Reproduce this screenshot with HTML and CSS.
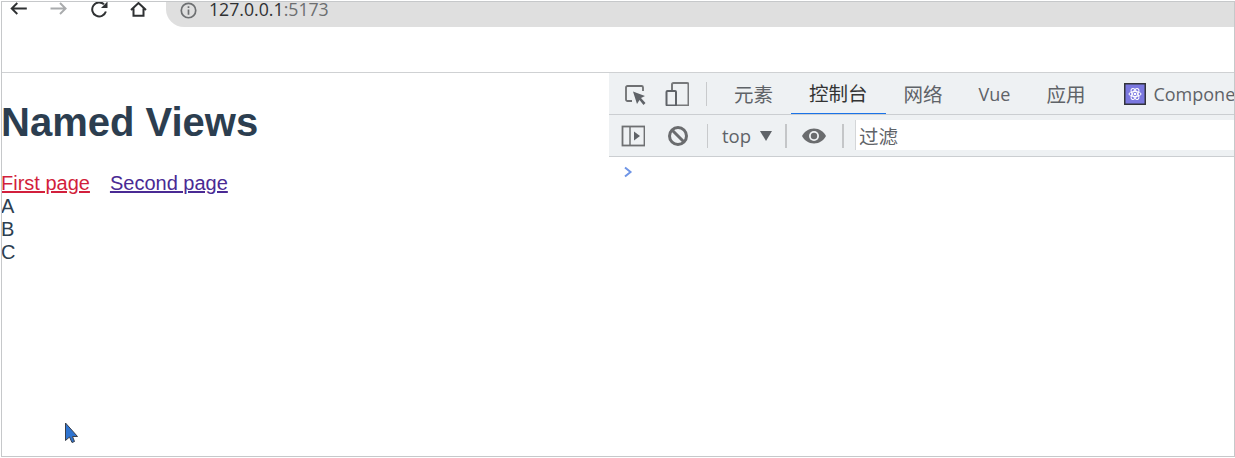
FILE: index.html
```html
<!DOCTYPE html>
<html lang="zh">
<head>
<meta charset="utf-8">
<title>Named Views</title>
<link rel="stylesheet" href="styles.css">
</head>
<body>
<div class="window">
  <header class="browserbar">
    <div class="navicons">
      <svg class="nav" width="18" height="18" viewBox="0 0 18 18"><path d="M16.800 8.500H1.800M7.300 3L1.700 8.500L7.300 14" fill="none" stroke="#2f3133" stroke-width="1.900"/></svg>
      <svg class="nav" width="18" height="18" viewBox="0 0 18 18"><path d="M0.500 8.500H15.500M10 3L15.600 8.500L10 14" fill="none" stroke="#a9abad" stroke-width="1.900"/></svg>
      <svg class="nav" width="18" height="18" viewBox="0 0 18 18"><path d="M15.900 11.500A7 7 0 1 1 14 4.300" fill="none" stroke="#2f3133" stroke-width="2"/><path d="M17.500 1.500V8H11Z" fill="#2f3133"/></svg>
      <svg class="nav" width="18" height="18" viewBox="0 0 18 18"><path d="M1 10L8.500 3L16 10M3.500 8.500V15.700H13.500V8.500" fill="none" stroke="#2f3133" stroke-width="2"/></svg>
    </div>
    <div class="omnibox">
      <svg class="info" width="17" height="17" viewBox="0 0 16 16"><circle cx="8" cy="8" r="6.800" fill="none" stroke="#6e7072" stroke-width="1.600"/><path d="M7.200 4h1.600v1.600H7.200zM7.200 7h1.600v5H7.200z" fill="#6e7072"/></svg>
      <span class="url">127.0.0.1<span class="port">:5173</span></span>
    </div>
  </header>
  <main class="content">
    <section class="page">
      <h1 class="title">Named Views</h1>
      <nav class="links">
        <a class="link active" href="#first">First page</a>
        <a class="link second" href="#second">Second page</a>
      </nav>
      <div class="view">A</div>
      <div class="view">B</div>
      <div class="view">C</div>
    </section>
    <section class="devtools">
      <div class="tabs">
        <svg class="dt-icon inspect" width="24" height="24" viewBox="0 0 24 24"><path d="M9 19H4.500A1.500 1.500 0 0 1 3 17.500V5.500A1.500 1.500 0 0 1 4.500 4H18.500A1.500 1.500 0 0 1 20 5.500V9" fill="none" stroke="#6e7072" stroke-width="1.800"/><path d="M10 9.500L22 14L18 16L22.500 21L20.500 23L16.500 18L14 22Z" fill="#5f6368"/></svg>
        <svg class="dt-icon device" width="24" height="24" viewBox="0 0 24 24"><path d="M7 9V2.500A1.500 1.500 0 0 1 8.500 1H22A1.500 1.500 0 0 1 23.500 2.500V22A1 1 0 0 1 22 23.500H11" fill="none" stroke="#77797b" stroke-width="2"/><rect x="1.500" y="9" width="9.500" height="14.500" rx="1" fill="none" stroke="#5f6368" stroke-width="2"/></svg>
        <span class="vsep tall"></span>
        <span class="tab">元素</span>
        <span class="tab selected">控制台</span>
        <span class="tab">网络</span>
        <span class="tab vue">Vue</span>
        <span class="tab">应用</span>
        <span class="tab comp">
          <svg class="react" width="22" height="22" viewBox="0 0 22 22"><rect x="0.750" y="0.750" width="20.500" height="20.500" fill="#7b78e0" stroke="#33343c" stroke-width="1.500"/><g fill="none" stroke="#fff" stroke-width="1"><ellipse cx="11" cy="11" rx="6" ry="2.600"/><ellipse cx="11" cy="11" rx="6" ry="2.600" transform="rotate(60 11 11)"/><ellipse cx="11" cy="11" rx="6" ry="2.600" transform="rotate(120 11 11)"/></g><circle cx="11" cy="11" r="1.300" fill="#fff"/></svg>
          <span>Compone</span>
        </span>
      </div>
      <div class="filterbar">
        <svg class="fb-icon" width="24" height="24" viewBox="0 0 24 24"><rect x="1.500" y="2.500" width="22" height="19" fill="none" stroke="#6e7072" stroke-width="1.800"/><path d="M9 3V21" stroke="#6e7072" stroke-width="1.500"/><path d="M13 7.500L19 12L13 16.500Z" fill="#5f6368"/></svg>
        <svg class="fb-icon clear" width="22" height="22" viewBox="0 0 22 22"><circle cx="11" cy="11" r="8.500" fill="none" stroke="#6a6c6e" stroke-width="3"/><path d="M5 5L17 17" stroke="#6a6c6e" stroke-width="3"/></svg>
        <span class="vsep first"></span>
        <span class="context">top</span>
        <span class="caret"></span>
        <span class="vsep thick"></span>
        <svg class="fb-icon eye" width="26" height="18" viewBox="0 0 26 18"><path d="M13 1.500C7.500 1.500 3.200 4.800 1 9C3.200 13.200 7.500 16.500 13 16.500C18.500 16.500 22.800 13.200 25 9C22.800 4.800 18.500 1.500 13 1.500Z" fill="#6a6c6e"/><circle cx="13" cy="9" r="5" fill="#eef1f3"/><circle cx="13" cy="9" r="3.200" fill="#6a6c6e"/></svg>
        <span class="vsep thick"></span>
        <div class="filter">过滤</div>
      </div>
      <div class="console">
        <svg class="prompt" width="10" height="12" viewBox="0 0 10 12"><path d="M2 1.500L7.500 6L2 10.500" fill="none" stroke="#6f95e6" stroke-width="2"/></svg>
      </div>
    </section>
  </main>
  <svg class="cursor" width="16" height="22" viewBox="0 0 16 22"><path d="M1.500 1V18.500L5.500 15L8 20.500L10.500 19.500L8.500 14.500H13.500Z" fill="#2f74d0" stroke="#3a3f4a" stroke-width="1"/></svg>
</div>
</body>
</html>
```
FILE: styles.css
```css
* { box-sizing: border-box; }
html, body { height: 100%; background: #fff; overflow: hidden; }
body { margin: 0; padding: 1px 0 0 1px; }
.window {
  position: relative;
  width: 1234px;
  height: 456px;
  border: 1px solid #c6c8ca;
  display: flex;
  flex-direction: column;
  overflow: hidden;
}
.browserbar {
  height: 71px;
  flex: none;
  border-bottom: 1px solid #cfd1d3;
  display: flex;
  align-items: flex-start;
}
.navicons {
  display: flex;
  gap: 22px;
  padding-left: 8px;
  width: 164px;
  margin-top: -2px;
}
.nav { flex: none; display: block; }
.omnibox {
  flex: 1;
  height: 25px;
  background: #dfdfdf;
  border-bottom-left-radius: 18px;
  display: flex;
  align-items: flex-start;
  padding-left: 14px;
}
.info { flex: none; }
.url {
  font: 17.700px/14px "Open Sans", sans-serif;
  color: #2f3133;
  margin-left: 12px;
}
.port { color: #6c6e70; }
.content { flex: 1; display: flex; min-height: 0; }
.page {
  width: 608px;
  margin-left: -1px;
  flex: none;
  color: #2c3e50;
  font: 20px/23px "Liberation Sans", Arial, sans-serif;
}
.title {
  font-size: 40px;
  line-height: 46px;
  font-weight: 700;
  margin: 26px 0 27px;
}
.links { display: flex; gap: 20px; }
.link { text-decoration: underline; }
.active { color: #d21f3c; }
.second { color: #4a2a94; }
.devtools { flex: 1; min-width: 0; display: flex; flex-direction: column; }
.tabs {
  height: 42px;
  flex: none;
  background: #eef1f3;
  border-bottom: 1px solid #cbced1;
  display: flex;
  align-items: center;
  padding-left: 14px;
  overflow: hidden;
  white-space: nowrap;
  font: 19.500px/24px "Noto Sans CJK SC", "Liberation Sans", sans-serif;
  color: #5f6368;
}
.dt-icon { flex: none; }
.device { margin-left: 18px; }
.vsep { width: 1px; height: 24px; background: #c8cacc; flex: none; }
.vsep.tall { margin-left: 17px; margin-right: 9px; }
.tab {
  flex: none;
  height: 41px;
  padding: 0 18px;
  display: flex;
  align-items: center;
  gap: 7px;
}
.selected { color: #333; border-bottom: 1px solid #1a73e8; }
.vue { font: 18px/24px "Open Sans", sans-serif; }
.comp { font: 18px/24px "Open Sans", sans-serif; padding-left: 21px; }
.filterbar {
  height: 42px;
  flex: none;
  background: #eef1f3;
  border-bottom: 1px solid #cbced1;
  display: flex;
  align-items: center;
  padding-left: 12px;
}
.fb-icon { flex: none; }
.clear { margin-left: 22px; }
.filterbar .first { margin-left: 18px; }
.context {
  font: 18.500px/24px "Open Sans", sans-serif;
  color: #5f6368;
  margin-left: 14px;
}
.caret {
  width: 0; height: 0;
  margin-left: 9px;
  border-left: 6px solid transparent;
  border-right: 6px solid transparent;
  border-top: 10px solid #5f6368;
}
.filterbar .thick { width: 2px; margin-left: 13px; background: #c4c6c8; }
.eye { margin-left: 14px; }
.filterbar .eye + .thick { margin-left: 15px; }
.filter {
  flex: 1;
  height: 30px;
  margin: -1px 0 0 11px;
  background: #fff;
  border-left: 1px solid #d4d6d8;
  padding-left: 3px;
  font: 19.500px/32px "Noto Sans CJK SC", sans-serif;
  color: #5f6368;
}
.console { flex: 1; padding: 9px 0 0 14px; background: #fff; }
.prompt { display: block; }
.cursor { position: absolute; left: 62px; top: 420px; }
```
